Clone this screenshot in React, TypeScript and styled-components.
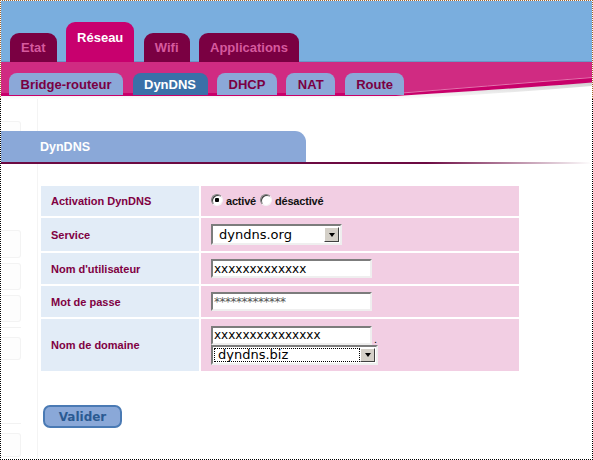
import React from "react";
import styled, { createGlobalStyle } from "styled-components";

const GlobalStyle = createGlobalStyle`
  html, body {
    margin: 0;
    padding: 0;
    background: #fff;
    font-family: "Liberation Sans", Arial, sans-serif;
  }
`;

const Frame = styled.div`
  width: 593px;
  height: 460px;
  display: flex;
  flex-direction: column;
  overflow: hidden;
`;

const Header = styled.div`
  border: 1px dotted #a0622a;
  border-bottom: none;
  display: flex;
  flex-direction: column;
`;

const TopBar = styled.div`
  height: 61px;
  background: #7aaede;
  display: flex;
  align-items: flex-end;
  gap: 9.5px;
  padding-left: 9px;
  box-shadow: inset 0 -1px 0 #6a96c6;
`;

const MainTab = styled.div<{ $active?: boolean }>`
  height: ${p => (p.$active ? 40 : 29)}px;
  padding: ${p => (p.$active ? "8px" : "0")} 11px 0;
  box-sizing: border-box;
  display: flex;
  align-items: ${p => (p.$active ? "flex-start" : "center")};
  background: ${p => (p.$active ? "#c8006e" : "#7a0042")};
  color: ${p => (p.$active ? "#fff" : "#d65a9e")};
  border-radius: 9px 9px 0 0;
  font-size: 13px;
  font-weight: bold;
  line-height: 15px;
`;

const Band = styled.div`
  position: relative;
  height: 37px;
  background: #fff;
`;

const Swoosh = styled.svg`
  position: absolute;
  inset: 0;
  width: 100%;
  height: 100%;
`;

const SubTabs = styled.div`
  position: relative;
  display: flex;
  gap: 9.5px;
  padding: 11px 0 0 8px;
`;

const SubTab = styled.div<{ $active?: boolean }>`
  height: 22px;
  padding: 0 11.5px;
  box-sizing: border-box;
  display: flex;
  align-items: center;
  background: ${p => (p.$active ? "#3a70a8" : "#8ba8d8")};
  color: ${p => (p.$active ? "#fff" : "#7a0042")};
  border-radius: 8px 8px 0 0;
  font-size: 13px;
  font-weight: bold;
`;

const Content = styled.div`
  position: relative;
  flex: 1;
  border: 1px dotted #000;
  border-top: none;
  display: flex;
  flex-direction: column;
  align-items: flex-start;
`;

const SideDecor = styled.div`
  position: absolute;
  left: 0;
  top: 0;
  bottom: 0;
  width: 36px;
  border-right: 1px solid #f4f4f4;
`;

const GhostBox = styled.div<{ $top: number; $h: number }>`
  position: absolute;
  left: 0;
  top: ${p => p.$top}px;
  width: 19px;
  height: ${p => p.$h}px;
  border: 1px solid #f3f3f3;
  border-left: none;
  border-radius: 0 3px 3px 0;
  background: #fdfdfd;
`;

const GhostLine = styled.div<{ $top: number }>`
  position: absolute;
  left: 0;
  top: ${p => p.$top}px;
  width: 20px;
  height: 1px;
  background: #f2f2f2;
`;

const TitleRow = styled.div`
  position: relative;
  margin-top: 32px;
  width: 100%;
  &::after {
    content: "";
    display: block;
    height: 2px;
    background: linear-gradient(to right, #6c0a42 0%, #6c0a42 72%, rgba(108, 10, 66, 0) 100%);
  }
`;

const TitleBar = styled.div`
  width: 305px;
  height: 31px;
  box-sizing: border-box;
  padding-left: 39px;
  display: flex;
  align-items: center;
  background: #8aa8d8;
  color: #fff;
  border-radius: 0 11px 0 0;
  font-size: 12.5px;
  font-weight: bold;
`;

const FormGrid = styled.div`
  position: relative;
  margin: 22px 0 0 40px;
  display: grid;
  grid-template-columns: 158px 318px;
  grid-template-rows: 30px 33px 31px 31px 52px;
  gap: 2px;
`;

const LabelCell = styled.div`
  background: #e2ecf7;
  color: #800042;
  font-size: 11px;
  font-weight: bold;
  padding-left: 10px;
  display: flex;
  align-items: center;
`;

const ValueCell = styled.div<{ $stack?: boolean }>`
  background: #f2cee3;
  padding-left: 10px;
  display: flex;
  flex-direction: ${p => (p.$stack ? "column" : "row")};
  justify-content: ${p => (p.$stack ? "center" : "flex-start")};
  align-items: ${p => (p.$stack ? "flex-start" : "center")};
`;

const Radio = styled.span<{ $checked?: boolean }>`
  width: 12px;
  height: 12px;
  box-sizing: border-box;
  border-radius: 50%;
  border: 1px solid;
  border-color: #808080 #f4f4f4 #f4f4f4 #808080;
  box-shadow: inset 1px 1px 0 #404040;
  background: #fff;
  display: flex;
  align-items: center;
  justify-content: center;
  margin-top: -3px;
  &::after {
    content: "";
    width: 4px;
    height: 4px;
    background: ${p => (p.$checked ? "#000" : "transparent")};
    border-radius: 1px;
  }
`;

const RadioText = styled.span`
  font-size: 11px;
  font-weight: bold;
  color: #111;
  margin: 0 4px 0 3px;
  letter-spacing: -0.2px;
`;

const TextBox = styled.input`
  width: 161px;
  height: 19px;
  box-sizing: border-box;
  margin: 0;
  padding: 0 1px;
  border: 2px solid;
  border-color: #7c7c7c #efefef #efefef #7c7c7c;
  background: #fff;
  font-family: "DejaVu Sans", sans-serif;
  font-size: 12px;
  color: #000;
  outline: none;
`;

const Masked = styled(TextBox)`
  color: #555;
  letter-spacing: -0.5px;
`;

const SelectBox = styled.div<{ $width: number; $height: number }>`
  width: ${p => p.$width}px;
  height: ${p => p.$height}px;
  box-sizing: border-box;
  border: 2px solid;
  border-color: #7c7c7c #efefef #efefef #7c7c7c;
  background: #fff;
  display: flex;
  align-items: stretch;
  padding: 1px;
`;

const SelectText = styled.div<{ $focused?: boolean }>`
  flex: 1;
  display: flex;
  align-items: center;
  padding-left: ${p => (p.$focused ? 3 : 4)}px;
  border: 1px dotted ${p => (p.$focused ? "#000" : "transparent")};
  font-family: "DejaVu Sans", sans-serif;
  font-size: 13px;
  color: #000;
`;

const DropButton = styled.div`
  width: 15px;
  box-sizing: border-box;
  background: #d4d0c8;
  border: 1px solid;
  border-color: #fff #404040 #404040 #fff;
  display: flex;
  align-items: center;
  justify-content: center;
  &::after {
    content: "";
    border-left: 3.5px solid transparent;
    border-right: 3.5px solid transparent;
    border-top: 4px solid #000;
  }
`;

const DomainLine = styled.div`
  display: flex;
  align-items: flex-end;
  font-size: 11px;
  line-height: 11px;
`;

const Dot = styled.span`
  margin-left: 2px;
  color: #000;
`;

const ValidateButton = styled.button`
  margin: 34px 0 0 42px;
  width: 79px;
  height: 23px;
  box-sizing: border-box;
  padding: 0;
  border: 2px solid #4a7ab4;
  border-radius: 7px;
  background: #8aa8d8;
  color: #2a5a92;
  font-family: "DejaVu Sans", sans-serif;
  font-size: 12px;
  font-weight: bold;
`;

const mainTabs = ["Etat", "Réseau", "Wifi", "Applications"];
const subTabs = ["Bridge-routeur", "DynDNS", "DHCP", "NAT", "Route"];

function Select({ value, width, height, focused }: { value: string; width: number; height: number; focused?: boolean }) {
  return (
    <SelectBox $width={width} $height={height}>
      <SelectText $focused={focused}>{value}</SelectText>
      <DropButton />
    </SelectBox>
  );
}

export default function App() {
  return (
    <Frame>
      <GlobalStyle />
      <Header>
        <TopBar>
          {mainTabs.map(t => (
            <MainTab key={t} $active={t === "Réseau"}>{t}</MainTab>
          ))}
        </TopBar>
        <Band>
          <Swoosh viewBox="0 0 591 37" preserveAspectRatio="none">
            <defs>
              <linearGradient id="shade" x1="0" y1="0" x2="0" y2="1">
                <stop offset="0" stopColor="#cfcfcf" />
                <stop offset="1" stopColor="#ffffff" />
              </linearGradient>
            </defs>
            <path d="M0 34 H395 Q480 29 591 20 V24 Q480 33 395 37.5 H0 Z" fill="url(#shade)" />
            <path d="M0 0 H591 V20.5 Q480 29 395 34 H0 Z" fill="#c8006a" />
            <path d="M0 0 H591 V15 Q480 24 395 31 H0 Z" fill="#d02b82" />
            <path d="M395 31.5 Q480 24.5 591 15.5" stroke="#e275ae" strokeWidth="1" fill="none" />
          </Swoosh>
          <SubTabs>
            {subTabs.map(t => (
              <SubTab key={t} $active={t === "DynDNS"}>{t}</SubTab>
            ))}
          </SubTabs>
        </Band>
      </Header>
      <Content>
        <SideDecor>
          <GhostBox $top={22} $h={24} />
          <GhostBox $top={131} $h={26} />
          <GhostBox $top={164} $h={25} />
          <GhostBox $top={196} $h={25} />
          <GhostLine $top={228} />
          <GhostBox $top={238} $h={21} />
          <GhostLine $top={324} />
          <GhostBox $top={334} $h={22} />
        </SideDecor>
        <TitleRow>
          <TitleBar>DynDNS</TitleBar>
        </TitleRow>
        <FormGrid>
          <LabelCell>Activation DynDNS</LabelCell>
          <ValueCell>
            <Radio $checked />
            <RadioText>activé</RadioText>
            <Radio />
            <RadioText>désactivé</RadioText>
          </ValueCell>

          <LabelCell>Service</LabelCell>
          <ValueCell>
            <Select value="dyndns.org" width={131} height={21} />
          </ValueCell>

          <LabelCell>Nom d'utilisateur</LabelCell>
          <ValueCell>
            <TextBox defaultValue="xxxxxxxxxxxxx" />
          </ValueCell>

          <LabelCell>Mot de passe</LabelCell>
          <ValueCell>
            <Masked defaultValue="*************" />
          </ValueCell>

          <LabelCell>Nom de domaine</LabelCell>
          <ValueCell $stack>
            <DomainLine>
              <TextBox defaultValue="xxxxxxxxxxxxxxx" />
              <Dot>.</Dot>
            </DomainLine>
            <Select value="dyndns.biz" width={167} height={20} focused />
          </ValueCell>
        </FormGrid>
        <ValidateButton>Valider</ValidateButton>
      </Content>
    </Frame>
  );
}
